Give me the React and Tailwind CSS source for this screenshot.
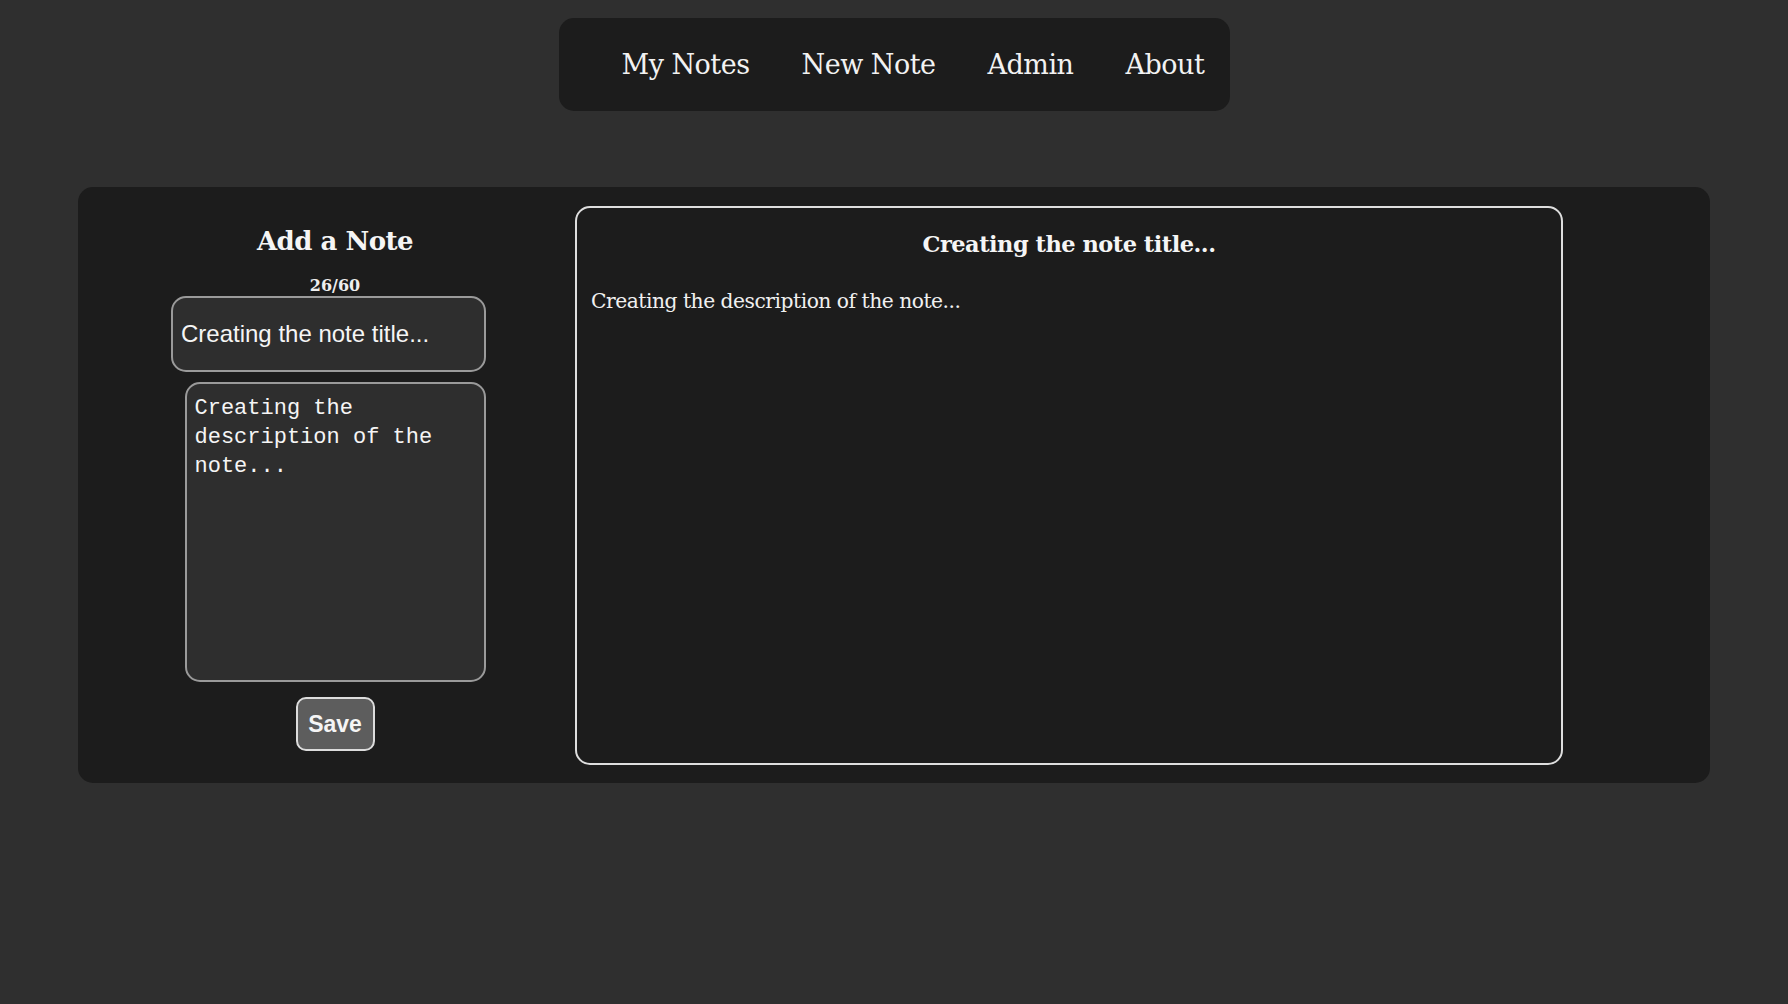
import React, { useState } from "react";

const links = ["My Notes", "New Note", "Admin", "About"];

function NavBar() {
  return (
    <nav className="mt-[18px] flex h-[93px] w-[671px] items-center rounded-[15px] bg-[#1c1c1c] pl-[63px]">
      <ul className="flex items-center gap-[52px]">
        {links.map((link) => (
          <li
            key={link}
            className="font-['DejaVu_Serif',serif] text-[27px] leading-none tracking-[-0.5px] text-[#f2f2f2]"
          >
            {link}
          </li>
        ))}
      </ul>
    </nav>
  );
}

export default function App() {
  const [title, setTitle] = useState("Creating the note title...");
  const [description, setDescription] = useState(
    "Creating the description of the note..."
  );

  return (
    <div className="flex min-h-[1004px] flex-col items-center bg-[#2f2f2f]">
      <NavBar />

      <div className="mt-[76px] flex h-[596px] w-[1632px] rounded-[15px] bg-[#1c1c1c] py-[19px]">
        {/* Add note form */}
        <div className="flex w-[497px] flex-col items-center pl-[17px] pt-[18px]">
          <h2 className="font-['DejaVu_Serif',serif] text-[26px] font-bold leading-[34px] tracking-[-0.5px] text-[#f5f5f5]">
            Add a Note
          </h2>
          <div className="mt-[18px] font-['DejaVu_Serif',serif] text-[16px] font-bold leading-[20px] text-[#eeeeee]">
            {title.length}/60
          </div>
          <input
            type="text"
            value={title}
            maxLength={60}
            onChange={(e) => setTitle(e.target.value)}
            className="mr-[13px] h-[76px] w-[315px] rounded-[15px] border-2 border-[#9a9a9a] bg-[#2e2e2e] px-[8px] font-['Liberation_Sans',Arial,sans-serif] text-[24px] text-[#f5f5f5] outline-none"
          />
          <textarea
            value={description}
            onChange={(e) => setDescription(e.target.value)}
            spellCheck={false}
            className="mt-[10px] h-[300px] w-[301px] resize-none rounded-[15px] border-2 border-[#9a9a9a] bg-[#2e2e2e] px-[8px] pt-[10px] font-['Liberation_Mono','DejaVu_Sans_Mono',monospace] text-[22px] leading-[29px] text-[#f5f5f5] outline-none"
          />
          <button
            type="button"
            className="mt-[15px] h-[54px] w-[79px] rounded-[10px] border-2 border-[#dcdcdc] bg-[#5d5d5d] font-['Liberation_Sans',Arial,sans-serif] text-[23px] font-bold text-[#f5f5f5]"
          >
            Save
          </button>
        </div>

        {/* Preview */}
        <div className="h-[559px] w-[988px] rounded-[15px] border-2 border-[#dedede] px-[14px] pt-[22px]">
          <h3 className="text-center font-['DejaVu_Serif',serif] text-[22.5px] font-bold leading-[28px] tracking-[-0.5px] text-[#f5f5f5]">
            {title}
          </h3>
          <p className="mt-[30px] font-['DejaVu_Serif',serif] text-[20.3px] leading-[26px] tracking-[-0.5px] text-[#f0f0f0]">
            {description}
          </p>
        </div>
      </div>
    </div>
  );
}
